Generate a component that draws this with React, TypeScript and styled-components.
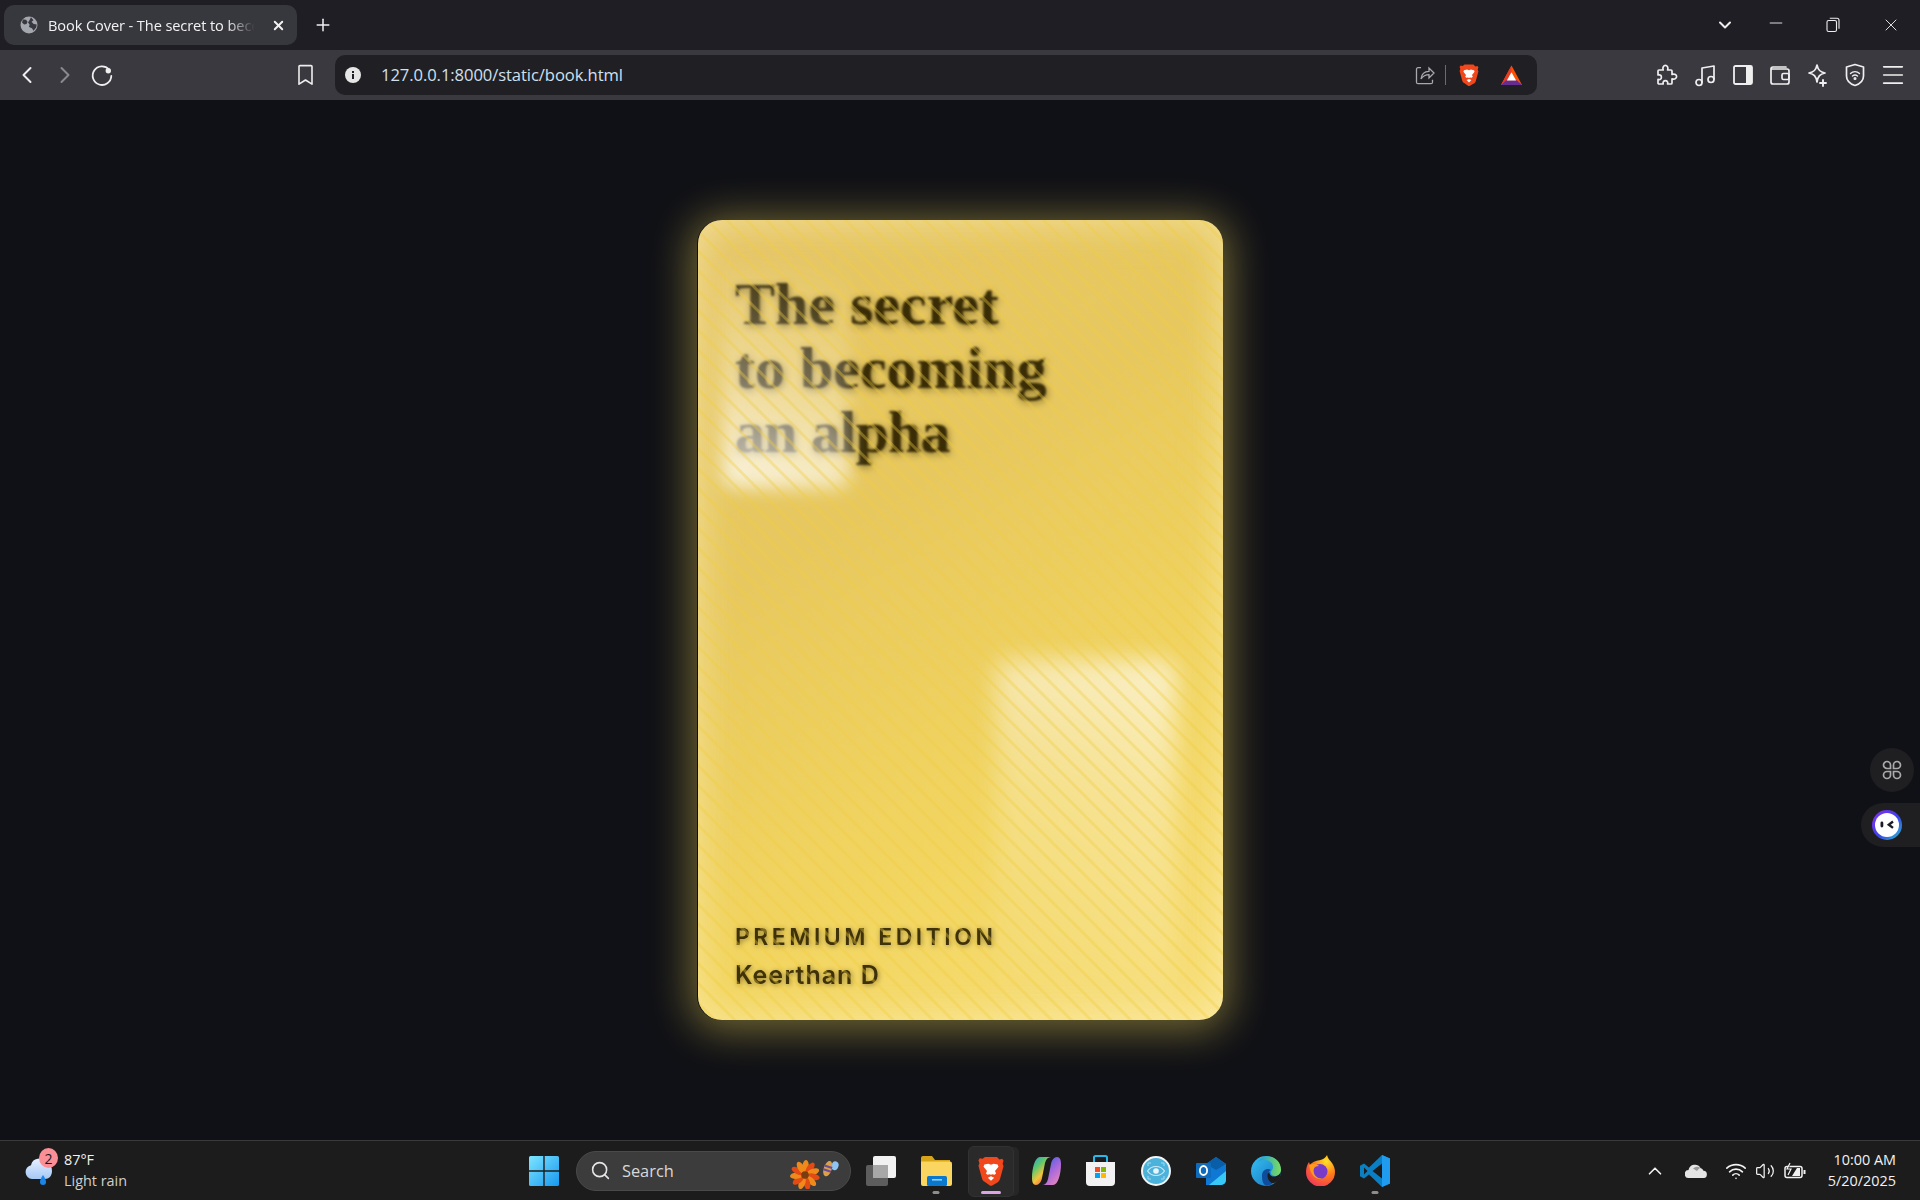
import React from "react";
import styled, { createGlobalStyle } from "styled-components";
import { ChevronLeft, ChevronRight, Plus, X, Minus, ChevronDown, ChevronUp, Search, Wifi, Volume2, Menu } from "lucide-react";

const Global = createGlobalStyle`
  html, body { margin: 0; padding: 0; background: #101116; }
  * { box-sizing: border-box; }
`;
const Page = styled.div`
  position: relative; width: 100%; height: 100vh; display: flex; flex-direction: column; overflow: hidden;
  font-family: "Open Sans", "Liberation Sans", sans-serif; color: #fff;
`;
const TabStrip = styled.div`
  height: 50px; flex: none; background: #1e1e24; display: flex; align-items: center; padding: 0 0 0 4px;
`;
const Tab = styled.div`
  width: 293px; height: 40px; background: #37373e; border-radius: 10px; display: flex; align-items: center; padding: 0 11px 0 16px; gap: 10px; flex: none;
`;
const TabTitle = styled.span`
  flex: 1; font-size: 14.6px; letter-spacing: -0.1px; white-space: nowrap; overflow: hidden; color: #f2f2f2;
  mask-image: linear-gradient(to right, #000 84%, transparent 97%);
`;
const NewTab = styled.div`
  width: 26px; margin-left: 13px; display: flex; justify-content: center; color: #f0f0f0;
`;
const WindowButtons = styled.div`
  margin-left: auto; display: flex; align-items: center; color: #eee;
`;
const WinButton = styled.div<{ $w: number; $lift?: boolean }>`
  width: ${(p) => p.$w}px; display: flex; justify-content: center; align-items: center;
  margin-bottom: ${(p) => (p.$lift ? "4px" : "0")};
`;
const Toolbar = styled.div`
  height: 50px; flex: none; background: #39393f; display: flex; align-items: center; padding: 0 9px 0 8px; color: #eee;
`;
const NavButton = styled.div<{ $w: number; $dim?: boolean }>`
  width: ${(p) => p.$w}px; flex: none; display: flex; justify-content: center; align-items: center; color: ${(p) => (p.$dim ? "#8a8a8e" : "#efefef")};
`;
const Spacer = styled.div<{ $w: number }>`
  width: ${(p) => p.$w}px; flex: none;
`;
const UrlBar = styled.div`
  width: 1202px; height: 40px; flex: none; background: #1f1f24; border-radius: 10px; display: flex; align-items: center; padding: 0 14px 0 10px; margin-left: 11px;
`;
const UrlText = styled.span`
  font-size: 16.6px; letter-spacing: -0.08px; color: #cfe0ee; margin: -2px 0 0 20px; flex: 1; white-space: nowrap;
`;
const UrlDivider = styled.div`
  width: 1px; height: 20px; background: #6b6b70; margin: 0 11px 0 10px;
`;
const ExtIcons = styled.div`
  display: flex; align-items: center; margin-left: auto;
`;
const Content = styled.main`
  flex: 1; min-height: 0; background: #101116; display: flex; align-items: center; justify-content: center;
`;
const Card = styled.section`
  position: relative; width: 525px; height: 800px; margin-left: 1px; border-radius: 24px; overflow: hidden;
  background: linear-gradient(150deg, #e5c566 0%, #e7c85f 35%, #f2d560 70%, #f8de78 100%);
  box-shadow: inset 0 0 42px rgba(255, 245, 205, 0.55);
  display: flex; flex-direction: column; justify-content: space-between; padding: 52px 30px 30px 37px;
  &::after {
    content: ""; position: absolute; inset: 0; pointer-events: none;
    background: repeating-linear-gradient(45deg, rgba(240, 205, 65, 0) 0 10px, rgba(240, 205, 65, 0.36) 11px 13px, rgba(240, 205, 65, 0) 14px);
  }
`;
const CardShadow = styled.div`
  border-radius: 24px; box-shadow: 0 4px 42px 6px rgba(255, 226, 90, 0.42);
`;
const Title = styled.h1`
  margin: 0; font-family: "Liberation Serif", serif; font-weight: 700; font-size: 60px; line-height: 64px; color: #3a2d06;
  filter: blur(0.9px); text-shadow: 1px 2px 7px rgba(50, 38, 0, 0.55);
`;
const TitleLine = styled.span<{ $tight?: boolean }>`
  display: block; letter-spacing: ${(p) => (p.$tight ? "-0.9px" : "0")};
`;
const Glare = styled.div<{ $corner: "tl" | "br" }>`
  position: absolute; filter: blur(${(p) => (p.$corner === "tl" ? "9px" : "12px")});
  ${(p) =>
    p.$corner === "tl"
      ? `left: 24px; top: 40px; width: 128px; height: 228px; border-radius: 14px;
         background: linear-gradient(20deg, rgba(255,255,255,.72) 8%, rgba(255,255,255,.36) 42%, rgba(255,255,255,.1) 78%, rgba(255,255,255,0) 100%);`
      : `right: 46px; top: 440px; width: 182px; height: 370px; border-radius: 14px;
         background: linear-gradient(205deg, rgba(255,255,255,.66) 3%, rgba(255,255,255,.3) 38%, rgba(255,255,255,.1) 72%, rgba(255,255,255,0) 100%);`}
`;
const Footer = styled.div`
  position: relative; filter: blur(0.6px);
`;
const Edition = styled.div`
  font-family: "Inter", sans-serif; font-size: 23px; font-weight: 600; letter-spacing: 3.5px; color: #3f3208; line-height: 27px;
  text-shadow: 1px 1px 5px rgba(50, 38, 0, 0.5);
`;
const Author = styled.div`
  font-family: "Inter", sans-serif; font-size: 25px; font-weight: 600; letter-spacing: 1px; color: #3f3208; line-height: 30px; margin-top: 9px;
  text-shadow: 1px 1px 5px rgba(50, 38, 0, 0.5);
`;
const Floating = styled.div`
  position: absolute; background: #1f1f22;
`;
const CommandButton = styled(Floating)`
  right: 6px; top: 748px; width: 44px; height: 44px; border-radius: 50%; display: flex; align-items: center; justify-content: center;
`;
const AssistantTab = styled(Floating)`
  right: 0; top: 803px; width: 59px; height: 44px; border-radius: 22px 0 0 22px; display: flex; align-items: center; padding-left: 11px;
`;
const Taskbar = styled.footer`
  height: 60px; flex: none; background: #1c1c1c; border-top: 1px solid #3a3a3a; display: flex; align-items: center;
`;
const Weather = styled.div`
  width: 517px; flex: none; display: flex; align-items: center; padding-left: 24px; gap: 8px; position: relative;
`;
const Badge = styled.span`
  position: absolute; left: 39px; top: -2px; width: 19px; height: 20px; border-radius: 50%; background: #fa8f97; color: #1a1a1a; font-size: 14px; display: flex; align-items: center; justify-content: center;
`;
const WeatherText = styled.div`
  font-size: 14.4px; line-height: 20.5px; color: #f2f2f2;
`;
const WeatherSub = styled.div`
  color: #cfcfcf;
`;
const Slot = styled.div<{ $active?: boolean }>`
  position: relative; width: 54.9px; height: 48px; flex: none; display: flex; align-items: center; justify-content: center;
  & > svg { position: relative; }
  ${(p) =>
    p.$active &&
    `&::before {
      content: ""; position: absolute; left: 50%; top: -1px; width: 44px; height: 49px; transform: translateX(-50%);
      background: #2a2a2a; border: 1px solid #323232; border-radius: 6px; box-shadow: 6px 0 0 -1px #262626;
    }`}
`;
const Dot = styled.span<{ $active?: boolean }>`
  position: absolute; bottom: 1px; left: 50%; transform: translateX(-50%); height: 3px; border-radius: 2px;
  width: ${(p) => (p.$active ? "20px" : "7px")}; background: ${(p) => (p.$active ? "#dca4e4" : "#8d8d8d")};
`;
const SearchPill = styled.div`
  width: 275px; height: 40px; flex: none; margin-left: 4px; margin-right: 3px; border-radius: 20px; background: #3c3c3c; border: 1px solid #4a4a4a; display: flex; align-items: center; padding: 0 11px 0 13px; gap: 11px; color: #e6e6e6;
`;
const SearchLabel = styled.span`
  font-size: 16.4px; flex: 1; color: #d8d8d8;
`;
const Tray = styled.div`
  margin-left: auto; display: flex; align-items: center; color: #f2f2f2; padding-right: 24px;
`;
const TrayItem = styled.div<{ $w: number }>`
  width: ${(p) => p.$w}px; display: flex; justify-content: center; align-items: center;
`;
const Clock = styled.div`
  width: 70px; margin-left: 14px; text-align: right; white-space: nowrap; font-size: 14.4px; line-height: 20.5px; color: #f2f2f2;
`;

const Brave = ({ s = 24 }: { s?: number }) => (
  <svg width={s} height={s} viewBox="0 0 24 24">
    <path d="M7.5 1.5h9l1.8 1.9 2.1-.5 1 1.5-.7 2.2.7 1.9-2.6 9.4c-.4 1.400-1 2-2 2.700L12.600 23h-1.200l-4.200-2.900c-1-.7-1.600-1.300-2-2.700L2.600 8l.7-1.900-.7-2.200 1-1.500 2.100.5z" fill="#f1471d" />
    <path d="M7 7.200l3-.6 2 .7 2-.7 3 .6.600 1.600-2.600 3.200.8 1.800-1.200 1-1.600-.4-1 .5-1-.5-1.600.4-1.200-1 .8-1.800-2.600-3.200z" fill="#fff" />
    <path d="M9.600 17l2.400-1 2.400 1-2.400 2.400z" fill="#fff" />
  </svg>
);
const Bat = () => (
  <svg width="23" height="23" viewBox="0 0 24 24">
    <path d="M12 1.500L1 22h22z" fill="#ff5000" />
    <path d="M12 1.500v7L6 18l-5 4z" fill="#e63a24" />
    <path d="M1 22l5.500-5h11l5.500 5z" fill="#662d91" />
    <path d="M12 8.500l4.800 8.800H7.200z" fill="#fff" />
  </svg>
);
const Globe = () => (
  <svg width="18" height="18" viewBox="0 0 18 18">
    <circle cx="9" cy="9" r="8.500" fill="#a4a7ad" />
    <path d="M3 3.500l3 .2 1.500 2-1 2.300-2.400.5L2 6.500zM11 1.200l2.500 3-2 1.600 2.200 2.300 3 .3-.5 3-2.700 3.400-1.500-2.600-3-1.200.6-2.500-1.600-2L9.500 4.300z" fill="#37373e" />
  </svg>
);
const Restore = () => (
  <svg width="14" height="16" viewBox="0 0 14 16" fill="none" stroke="#eee" strokeWidth="1.100">
    <rect x="1" y="3.500" width="9.500" height="11" rx="1.600" />
    <path d="M3.800 1.200h7.200a2 2 0 0 1 2 2v8.500" />
  </svg>
);
const BookmarkIcon = () => (
  <svg width="17" height="22" viewBox="0 0 17 22" fill="none" stroke="#eee" strokeWidth="1.600" strokeLinejoin="round">
    <path d="M2 2.600a1 1 0 0 1 1-1h11a1 1 0 0 1 1 1v17.600l-6.500-4.200L2 20.200z" />
  </svg>
);
const Reload = () => (
  <svg width="24" height="24" viewBox="0 0 24 24" fill="none">
    <path d="M19 6.500A9.300 9.300 0 1 0 21.300 13" stroke="#efefef" strokeWidth="1.800" strokeLinecap="round" />
    <circle cx="18.300" cy="7.800" r="2.700" fill="#efefef" />
  </svg>
);
const Info = () => (
  <svg width="16" height="16" viewBox="0 0 16 16">
    <circle cx="8" cy="8" r="8" fill="#e6e6e6" />
    <rect x="7" y="7" width="2" height="5" fill="#1f1f24" />
    <rect x="7" y="4" width="2" height="2" fill="#1f1f24" />
  </svg>
);
const Share = () => (
  <svg width="20" height="20" viewBox="0 0 20 20" fill="none" stroke="#a9a9ad" strokeWidth="1.300">
    <path d="M6 3H3a1.500 1.500 0 0 0-1.500 1.500v13A1.500 1.500 0 0 0 3 19h13a1.500 1.500 0 0 0 1.500-1.500V15" transform="translate(0 -.3)" />
    <path d="M6 14c.5-5 4-7.500 8-7.600V3l5 5-5 5V9.600c-3.400 0-6 1.300-8 4.400z" />
  </svg>
);
const stroke = { fill: "none", stroke: "#efefef", strokeWidth: 1.7, strokeLinecap: "round" as const, strokeLinejoin: "round" as const };
const PuzzleIcon = () => (
  <svg width="22" height="22" viewBox="0 0 22 22" {...stroke}>
    <path d="M3 6h4.200c-1-3 .6-4.600 2.200-4.600S12.600 3 11.600 6H15a1 1 0 0 1 1 1v3.400c3-1 4.600.7 4.600 2.200s-1.600 3.200-4.600 2.200V19a1 1 0 0 1-1 1h-3.400c.6-2.400-.6-3.400-2.200-3.400S6.600 17.600 7.200 20H3a1 1 0 0 1-1-1v-3.600c2.400.6 3.400-.6 3.400-2.200S4.400 10.400 2 11V7a1 1 0 0 1 1-1z" />
  </svg>
);
const MusicIcon = () => (
  <svg width="22" height="24" viewBox="0 0 22 24" {...stroke}>
    <circle cx="5" cy="19.500" r="3" /><circle cx="17" cy="16.500" r="3" />
    <path d="M8 19.500V5l12-2v13" />
  </svg>
);
const SidebarIcon = () => (
  <svg width="20" height="20" viewBox="0 0 20 20">
    <rect x="1" y="1" width="18" height="18" rx="1.500" fill="none" stroke="#efefef" strokeWidth="1.800" />
    <rect x="13" y="1" width="6" height="18" fill="#efefef" />
  </svg>
);
const WalletIcon = () => (
  <svg width="20" height="20" viewBox="0 0 20 20" {...stroke}>
    <path d="M1 4a2 2 0 0 1 2-2h13M1 4v13a2 2 0 0 0 2 2h14a2 2 0 0 0 2-2V6a2 2 0 0 0-2-2z" />
    <rect x="12" y="8.500" width="7" height="6" rx="1.500" />
  </svg>
);
const SparkIcon = () => (
  <svg width="22" height="24" viewBox="0 0 22 24" {...stroke}>
    <path d="M10 2c1 5 3 7 8 8-5 1-7 3-8 9-1-6-3-8-8-9 5-1 7-3 8-8z" />
    <path d="M16 17v6M13 20h6" strokeWidth="1.900" />
  </svg>
);
const ShieldIcon = () => (
  <svg width="20" height="24" viewBox="0 0 20 24" {...stroke}>
    <path d="M10 1.500l8.500 2.500v9c0 5-4 8-8.500 9.500C5.500 21 1.500 18 1.500 13V4z" />
    <path d="M5.500 10.500c2.500-2.500 6.500-2.500 9 0M7.500 13c1.500-1.200 3.500-1.200 5 0" strokeWidth="1.400" />
    <circle cx="10" cy="15.500" r=".7" />
  </svg>
);
const CommandIcon = () => (
  <svg width="20" height="20" viewBox="0 0 20 20" fill="none" stroke="#aaa" strokeWidth="1.700">
    <path d="M8.500 8.500H5a3.500 3.500 0 1 1 3.500-3.500zM11.500 8.500H15A3.500 3.500 0 1 0 11.500 5zM8.500 11.500H5A3.500 3.500 0 1 0 8.500 15zM11.500 11.500H15a3.500 3.500 0 1 1-3.500 3.500z" />
  </svg>
);
const LeoIcon = () => (
  <svg width="30" height="30" viewBox="0 0 30 30">
    <defs>
      <linearGradient id="leo" x1="0" y1="0" x2="1" y2="1">
        <stop offset="0" stopColor="#8a2cf0" /><stop offset=".55" stopColor="#3a44e8" /><stop offset="1" stopColor="#22c8d0" />
      </linearGradient>
    </defs>
    <circle cx="15" cy="15" r="15" fill="url(#leo)" />
    <circle cx="15" cy="15" r="12" fill="#fff" />
    <rect x="8.500" y="11.500" width="2.800" height="6" rx="1.400" fill="#1c1c28" />
    <path d="M21 11.500l-4.200 3.200 4.200 3.200" fill="none" stroke="#1c1c28" strokeWidth="2.400" />
  </svg>
);
const CloudRain = () => (
  <svg width="32" height="32" viewBox="0 0 32 32">
    <defs>
      <linearGradient id="cl" x1="0" y1="0" x2="0" y2="1"><stop offset="0" stopColor="#e6f0ff" /><stop offset="1" stopColor="#a5c8f5" /></linearGradient>
    </defs>
    <path d="M8 24a7 7 0 0 1-1-13.800A8 8 0 0 1 22 8a7.500 7.500 0 0 1 6 8c0 5-3 8-7 8z" fill="url(#cl)" />
    <path d="M19 20c2 3 3 5 3 7a3 3 0 0 1-6 0c0-2 1-4 3-7z" fill="#1a86ea" />
  </svg>
);
const WinLogo = () => (
  <svg width="30" height="30" viewBox="0 0 30 30">
    <defs>
      <linearGradient id="wl" x1="0" y1="0" x2="1" y2="1"><stop offset="0" stopColor="#7de5ff" /><stop offset="1" stopColor="#1797ef" /></linearGradient>
    </defs>
    <path d="M0 1.500A1.500 1.500 0 0 1 1.500 0h12.800v14.300H0zM15.700 0h12.800A1.500 1.500 0 0 1 30 1.500v12.800H15.700zM0 15.700h14.300V30H1.500A1.500 1.500 0 0 1 0 28.500zM15.700 15.700H30v12.800a1.500 1.500 0 0 1-1.500 1.500H15.700z" fill="url(#wl)" />
  </svg>
);
const Flower = () => (
  <svg width="50" height="36" viewBox="0 0 50 36">
    <g transform="translate(16 22)">
      {Array.from({ length: 11 }).map((_, i) => (
        <ellipse key={i} cx="0" cy="-8.500" rx="3.200" ry="6.500" fill={i % 2 ? "#e44a14" : "#ef8a1a"} transform={`rotate(${i * 32.700 + 4})`} />
      ))}
      <circle r="3.800" fill="#7a3d10" />
    </g>
    <g transform="translate(40 15) rotate(18)">
      <ellipse cx="5" cy="-4" rx="3.500" ry="4.500" fill="#8ec5f5" />
      <ellipse cx="-1" cy="1" rx="4" ry="8" fill="#dba04a" />
      <path d="M-5 -1h8M-5 3h8" stroke="#6a4a9a" strokeWidth="2" />
    </g>
  </svg>
);
const TaskView = () => (
  <svg width="30" height="30" viewBox="0 0 30 30">
    <rect x="0" y="9" width="22" height="21" rx="2" fill="#5d5d5d" />
    <rect x="7" y="0" width="23" height="22" rx="2" fill="#f2f2f2" />
    <rect x="7" y="9" width="15" height="13" fill="#a8a8a8" />
  </svg>
);
const Explorer = () => (
  <svg width="31" height="30" viewBox="0 0 31 30">
    <path d="M0 2a2 2 0 0 1 2-2h9l3 4h15v4H0z" fill="#d9a518" />
    <path d="M0 5.500h29a2 2 0 0 1 2 2V28a2 2 0 0 1-2 2H2a2 2 0 0 1-2-2z" fill="#fad660" />
    <rect x="6" y="20" width="20" height="10" rx="1.500" fill="#0a78cf" />
    <rect x="11" y="23" width="10" height="1.600" fill="#8fd0f5" />
  </svg>
);
const Copilot = () => (
  <svg width="29" height="28" viewBox="0 0 29 28">
    <defs>
      <linearGradient id="co1" x1="0" y1="0" x2=".7" y2="1"><stop offset="0" stopColor="#2f9fd8" /><stop offset=".35" stopColor="#5ac870" /><stop offset=".65" stopColor="#f4c43a" /><stop offset="1" stopColor="#ef4f4a" /></linearGradient>
      <linearGradient id="co2" x1=".2" y1="0" x2=".9" y2="1"><stop offset="0" stopColor="#3a60e0" /><stop offset=".5" stopColor="#a868dc" /><stop offset="1" stopColor="#f08ab8" /></linearGradient>
    </defs>
    <path d="M8 0h11c-3 0-5 2-6 6l-3 15c-.8 4-3 7-6 7-3 0-4-3-4-7C0 11 3 0 8 0z" fill="url(#co1)" />
    <path d="M21 28H10c3 0 5-2 6-6l3-15c.8-4 3-7 6-7 3 0 4 3 4 7 0 10-3 21-8 21z" fill="url(#co2)" />
  </svg>
);
const Store = () => (
  <svg width="29" height="31" viewBox="0 0 29 31">
    <path d="M8 8V2.500A1.500 1.500 0 0 1 9.500 1h10A1.500 1.500 0 0 1 21 2.500V8" fill="none" stroke="#28b8ec" strokeWidth="2" />
    <path d="M0 7h29v20a4 4 0 0 1-4 4H4a4 4 0 0 1-4-4z" fill="#f2f2f2" />
    <rect x="9" y="12" width="5" height="5" fill="#f25022" /><rect x="15" y="12" width="5" height="5" fill="#7fba00" />
    <rect x="9" y="18" width="5" height="5" fill="#00a4ef" /><rect x="15" y="18" width="5" height="5" fill="#ffb900" />
  </svg>
);
const EyeApp = () => (
  <svg width="30" height="30" viewBox="0 0 30 30">
    <circle cx="15" cy="15" r="14" fill="#4bb2dc" stroke="#f2f4f5" strokeWidth="2" />
    <path d="M6.500 15c4-6 13-6 17 0-4 6-13 6-17 0z" fill="none" stroke="#cde9f5" strokeWidth="1.200" />
    <circle cx="15" cy="15" r="2.800" fill="#e8f5fb" />
    <path d="M7 10V7h3M23 10V7h-3M7 20v3h3M23 20v3h-3" fill="none" stroke="#a6d8ee" strokeWidth="1" />
  </svg>
);
const Outlook = () => (
  <svg width="30" height="28" viewBox="0 0 30 28">
    <path d="M10 7l10-7 10 7v16a5 5 0 0 1-5 5H10z" fill="#0f78d4" />
    <path d="M20 0l10 7-10 6-10-6z" fill="#0a5ea8" />
    <path d="M13 28l17-14v9a5 5 0 0 1-5 5z" fill="#38c8f5" />
    <rect x="0" y="6" width="15" height="15" rx="1" fill="#0f6cbd" />
    <ellipse cx="7.500" cy="13.500" rx="3.600" ry="4.500" fill="none" stroke="#fff" strokeWidth="1.800" />
  </svg>
);
const Edge = () => (
  <svg width="30" height="30" viewBox="0 0 30 30">
    <defs>
      <linearGradient id="ed1" x1="0" y1="0" x2="1" y2="1"><stop offset="0" stopColor="#35c1f1" /><stop offset="1" stopColor="#1670c2" /></linearGradient>
      <linearGradient id="ed2" x1="0" y1="0" x2="1" y2="0"><stop offset="0" stopColor="#1a9ad8" /><stop offset="1" stopColor="#7cdc60" /></linearGradient>
    </defs>
    <circle cx="15" cy="15" r="15" fill="url(#ed1)" />
    <path d="M6 7C9 2 14 0 18 .500 24 1 30 6 30 14c0 4-3 6-6 6-2 0-4-1-4-3 0-3 2-3 2-6 0-4-4-7-8-7C10 4 8 5 6 7z" fill="url(#ed2)" />
    <path d="M30 15c-.5 3-3.500 5.500-7 5.500-3 0-5-2-4.500-4.500-2 .5-3.500 2.500-3.500 5 0 3 2.500 6 6 6 2 0 3.500-.5 5-1.500 2-2 4-5.500 4-10.500z" fill="#1c1c1c" />
    <path d="M11 20c0-5 3-7 6-7 1 0 2 .5 3 1-2 1-3.500 3-3.500 6 0 3 2 6 5 7.500-2 1.500-5 2.500-7 2-2.500-1.500-3.500-5-3.500-9.500z" fill="#0d4d9c" />
  </svg>
);
const Firefox = () => (
  <svg width="30" height="31" viewBox="0 0 30 31">
    <defs>
      <radialGradient id="ff" cx=".7" cy=".2" r="1"><stop offset="0" stopColor="#ffe226" /><stop offset=".45" stopColor="#ff7a1a" /><stop offset="1" stopColor="#f0246a" /></radialGradient>
    </defs>
    <path d="M22 0c1 4 3 5 5 8 2 3 3 6 3 9a14.500 14.500 0 0 1-29 0C1 13 2 10 4 7l1 3c1-2 3-3 6-4 5-1 9-2 11-6z" fill="url(#ff)" />
    <circle cx="15" cy="16.500" r="7.500" fill="#7a3ac8" />
    <path d="M4 10c4-2 8-1 10 1-5 0-6 3-5 7 1 4 5 6 9 5-6 3-12-1-14-13z" fill="#ff9a1a" />
  </svg>
);
const VSCode = () => (
  <svg width="30" height="32" viewBox="0 0 30 32">
    <path d="M22 0l8 3.500v25L22 32 9 19.500l-5 4-4-2.200v-10.600l4-2.200 5 4z" fill="#0a7fc4" />
    <path d="M22 0l8 3.500v25L22 32z" fill="#1f9cf0" />
    <path d="M22 8.500L12.500 16l9.500 7.500z" fill="#1c1c1c" />
    <path d="M4 12.500L7.500 16 4 19.500z" fill="#1c1c1c" />
  </svg>
);
const OneDrive = () => (
  <svg width="22" height="14" viewBox="0 0 22 14">
    <path d="M4 14a4 4 0 0 1-.5-8 6.500 6.500 0 0 1 12-2 4.800 4.800 0 0 1 3 2.800A3.600 3.600 0 0 1 18 14z" fill="#e4e4e4" />
    <path d="M8 4.500A6 6 0 0 1 15.500 4c-1.500.5-3 2-3.500 3z" fill="#9a9a9a" />
  </svg>
);
const Battery = () => (
  <svg width="22" height="18" viewBox="0 0 22 18" fill="none" stroke="#f2f2f2" strokeWidth="1.500">
    <rect x="1" y="4.500" width="17" height="11" rx="2" />
    <path d="M20.500 8v4" strokeWidth="2" />
    <path d="M6 1L3 7h4l-3 6" fill="#1c1c1c" strokeWidth="1.200" />
    <path d="M8 14l5-8h3v8z" fill="#f2f2f2" stroke="none" />
  </svg>
);

export default function App() {
  return (
    <Page>
      <Global />
      <TabStrip>
        <Tab>
          <Globe />
          <TabTitle>Book Cover - The secret to becoming an alpha</TabTitle>
          <X size={15} strokeWidth={3} color="#f2f2f2" />
        </Tab>
        <NewTab><Plus size={20} strokeWidth={1.8} /></NewTab>
        <WindowButtons>
          <WinButton $w={46}><ChevronDown size={20} strokeWidth={2.4} /></WinButton>
          <WinButton $w={56} $lift><Minus size={20} strokeWidth={1.1} /></WinButton>
          <WinButton $w={58}><Restore /></WinButton>
          <WinButton $w={58}><X size={20} strokeWidth={1.1} /></WinButton>
        </WindowButtons>
      </TabStrip>
      <Toolbar>
        <NavButton $w={38}><ChevronLeft size={28} strokeWidth={1.7} /></NavButton>
        <NavButton $w={38} $dim><ChevronRight size={28} strokeWidth={1.7} /></NavButton>
        <NavButton $w={36}><Reload /></NavButton>
        <Spacer $w={166} />
        <NavButton $w={38}><BookmarkIcon /></NavButton>
        <UrlBar>
          <Info />
          <UrlText>127.0.0.1:8000/static/book.html</UrlText>
          <Share />
          <UrlDivider />
          <Brave s={24} />
          <Spacer $w={19} />
          <Bat />
        </UrlBar>
        <ExtIcons>
          <NavButton $w={38}><PuzzleIcon /></NavButton>
          <NavButton $w={38}><MusicIcon /></NavButton>
          <NavButton $w={37}><SidebarIcon /></NavButton>
          <NavButton $w={38}><WalletIcon /></NavButton>
          <NavButton $w={37}><SparkIcon /></NavButton>
          <NavButton $w={38}><ShieldIcon /></NavButton>
          <NavButton $w={37}><Menu size={28} strokeWidth={1.4} /></NavButton>
        </ExtIcons>
      </Toolbar>
      <Content>
        <CardShadow>
          <Card>
            <Title>
              <TitleLine>The secret</TitleLine>
              <TitleLine>to becoming</TitleLine>
              <TitleLine $tight>an alpha</TitleLine>
            </Title>
            <Footer>
              <Edition>PREMIUM EDITION</Edition>
              <Author>Keerthan D</Author>
            </Footer>
            <Glare $corner="tl" />
            <Glare $corner="br" />
          </Card>
        </CardShadow>
      </Content>
      <CommandButton><CommandIcon /></CommandButton>
      <AssistantTab><LeoIcon /></AssistantTab>
      <Taskbar>
        <Weather>
          <CloudRain />
          <Badge>2</Badge>
          <WeatherText>87°F<WeatherSub>Light rain</WeatherSub></WeatherText>
        </Weather>
        <Slot><WinLogo /></Slot>
        <SearchPill>
          <Search size={21} strokeWidth={1.8} />
          <SearchLabel>Search</SearchLabel>
          <Flower />
        </SearchPill>
        <Slot><TaskView /></Slot>
        <Slot><Explorer /><Dot /></Slot>
        <Slot $active><Brave s={32} /><Dot $active /></Slot>
        <Slot><Copilot /></Slot>
        <Slot><Store /></Slot>
        <Slot><EyeApp /></Slot>
        <Slot><Outlook /></Slot>
        <Slot><Edge /></Slot>
        <Slot><Firefox /></Slot>
        <Slot><VSCode /><Dot /></Slot>
        <Tray>
          <TrayItem $w={34}><ChevronUp size={22} strokeWidth={1.8} /></TrayItem>
          <TrayItem $w={48}><OneDrive /></TrayItem>
          <TrayItem $w={32}><Wifi size={22} strokeWidth={1.8} /></TrayItem>
          <TrayItem $w={26}><Volume2 size={20} strokeWidth={1.5} /></TrayItem>
          <TrayItem $w={34}><Battery /></TrayItem>
          <Clock>10:00 AM<br />5/20/2025</Clock>
        </Tray>
      </Taskbar>
    </Page>
  );
}
